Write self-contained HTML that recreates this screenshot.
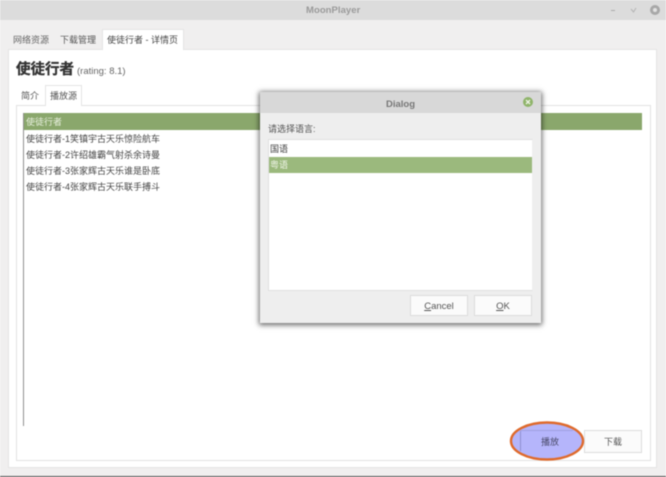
<!DOCTYPE html>
<html><head><meta charset="utf-8">
<style>
html,body{margin:0;padding:0;width:666px;height:477px;overflow:hidden;background:#fff}
#r{position:relative;width:666px;height:477px;background:#f0efef;overflow:hidden;font-family:"Liberation Sans","Noto Sans CJK SC",sans-serif;font-size:9px;color:#444;filter:blur(.5px)}
.a{position:absolute}
.t{position:absolute;white-space:nowrap;line-height:14px}
.b{position:absolute;box-sizing:border-box;background:#fbfbfb;border:1px solid #dcdcdc;text-align:center;color:#555}
</style></head><body><div id="r">
<div class="a" style="left:0;top:0;width:666px;height:20px;background:#dcdcdc"></div>
<div class="t" style="left:306px;top:4px;font-size:9.5px;font-weight:bold;color:#9a9a9a;letter-spacing:.05px">MoonPlayer</div>
<div class="a" style="left:611px;top:10px;width:4px;height:1px;background:#aaa"></div>
<svg class="a" style="left:630px;top:7px" width="7" height="7"><path d="M1 2L3.5 5L6 1" fill="none" stroke="#b5b5b5" stroke-width="1"/></svg>
<div class="a" style="left:650px;top:5px;width:10px;height:10px;border-radius:50%;background:#a8a8a8"></div>
<div class="a" style="left:653px;top:8px;width:4px;height:4px;border-radius:50%;background:#e2e2e2"></div>

<div class="a" style="left:8px;top:49px;width:649px;height:419px;box-sizing:border-box;background:#fff;border:1px solid #e4e4e4"></div>
<div class="a" style="left:102px;top:29px;width:82px;height:21px;box-sizing:border-box;background:#fff;border:1px solid #e4e4e4;border-bottom:0"></div>
<div class="t" style="left:13px;top:33px;color:#666">网络资源</div>
<div class="t" style="left:60px;top:33px;color:#555">下载管理</div>
<div class="t" style="left:107px;top:33px;color:#444">使徒行者 - 详情页</div>

<div class="t" style="left:16px;top:60px;font-size:14.5px;line-height:20px;font-weight:bold;color:#333;-webkit-text-stroke:.35px #333">使徒行者</div>
<div class="t" style="left:77px;top:65px;color:#666;font-size:9.5px">(rating: 8.1)</div>

<div class="a" style="left:16px;top:105px;width:635px;height:356px;box-sizing:border-box;background:#fff;border:1px solid #e2e2e2"></div>
<div class="a" style="left:45px;top:85px;width:37px;height:21px;box-sizing:border-box;background:#fff;border:1px solid #e4e4e4;border-bottom:0"></div>
<div class="t" style="left:21px;top:89px;color:#555">简介</div>
<div class="t" style="left:50px;top:89px;color:#555">播放源</div>

<div class="a" style="left:23px;top:113px;width:1px;height:313px;background:#8f8f8f"></div>
<div class="a" style="left:24px;top:113px;width:618px;height:17px;background:#8aa76c"></div>
<div class="t" style="left:26px;top:115px;color:#e8f0de">使徒行者</div>
<div class="t" style="left:26px;top:132px">使徒行者-1笑镇宇古天乐惊险航车</div>
<div class="t" style="left:26px;top:148px">使徒行者-2许绍雄霸气射杀余诗曼</div>
<div class="t" style="left:26px;top:164px">使徒行者-3张家辉古天乐谁是卧底</div>
<div class="t" style="left:26px;top:180px">使徒行者-4张家辉古天乐联手搏斗</div>

<div class="b" style="left:584px;top:430px;width:58px;height:23px;line-height:22px">下载</div>
<svg class="a" style="left:505px;top:416px" width="85" height="50"><ellipse cx="42" cy="25" rx="36" ry="18.5" fill="#b5b5fb" stroke="#df6a2c" stroke-width="2.4"/><path d="M15.5 15V35" stroke="#8f8fd0" stroke-width="1"/><path d="M15.5 14.5H68" stroke="#a0a0e0" stroke-width="1"/></svg>
<div class="t" style="left:541px;top:435px;color:#4a4a6a">播放</div>

<div class="a" style="left:260px;top:92px;width:281px;height:231px;background:#eeeeee;box-shadow:0 1px 5px 1px rgba(0,0,0,.6)"></div>
<div class="a" style="left:260px;top:92px;width:281px;height:21px;background:#d8d8d8"></div>
<div class="t" style="left:386px;top:98px;font-size:9.5px;font-weight:bold;color:#777">Dialog</div>
<div class="a" style="left:523px;top:97px;width:10px;height:10px;border-radius:50%;background:#8fb46a"></div>
<svg class="a" style="left:525px;top:99px" width="6" height="6"><path d="M1 1L5 5M5 1L1 5" stroke="#eef3e6" stroke-width="1.3"/></svg>
<div class="t" style="left:268px;top:122px;color:#555">请选择语言:</div>
<div class="a" style="left:268px;top:139px;width:265px;height:152px;box-sizing:border-box;background:#fff;border:1px solid #e0e0e0;border-right-color:#eee"></div>
<div class="a" style="left:269px;top:157px;width:263px;height:16px;background:#9bb97d"></div>
<div class="t" style="left:270px;top:142px;color:#444">国语</div>
<div class="t" style="left:270px;top:158px;color:#eef4e6">粤语</div>
<div class="b" style="left:410px;top:295px;width:58px;height:21px;line-height:21px;font-size:9.5px"><u>C</u>ancel</div>
<div class="b" style="left:474px;top:295px;width:58px;height:21px;line-height:21px;font-size:9.5px"><u>O</u>K</div>

<div class="a" style="left:0;top:476px;width:666px;height:1px;background:#4a4a4a"></div>
</div></body></html>
